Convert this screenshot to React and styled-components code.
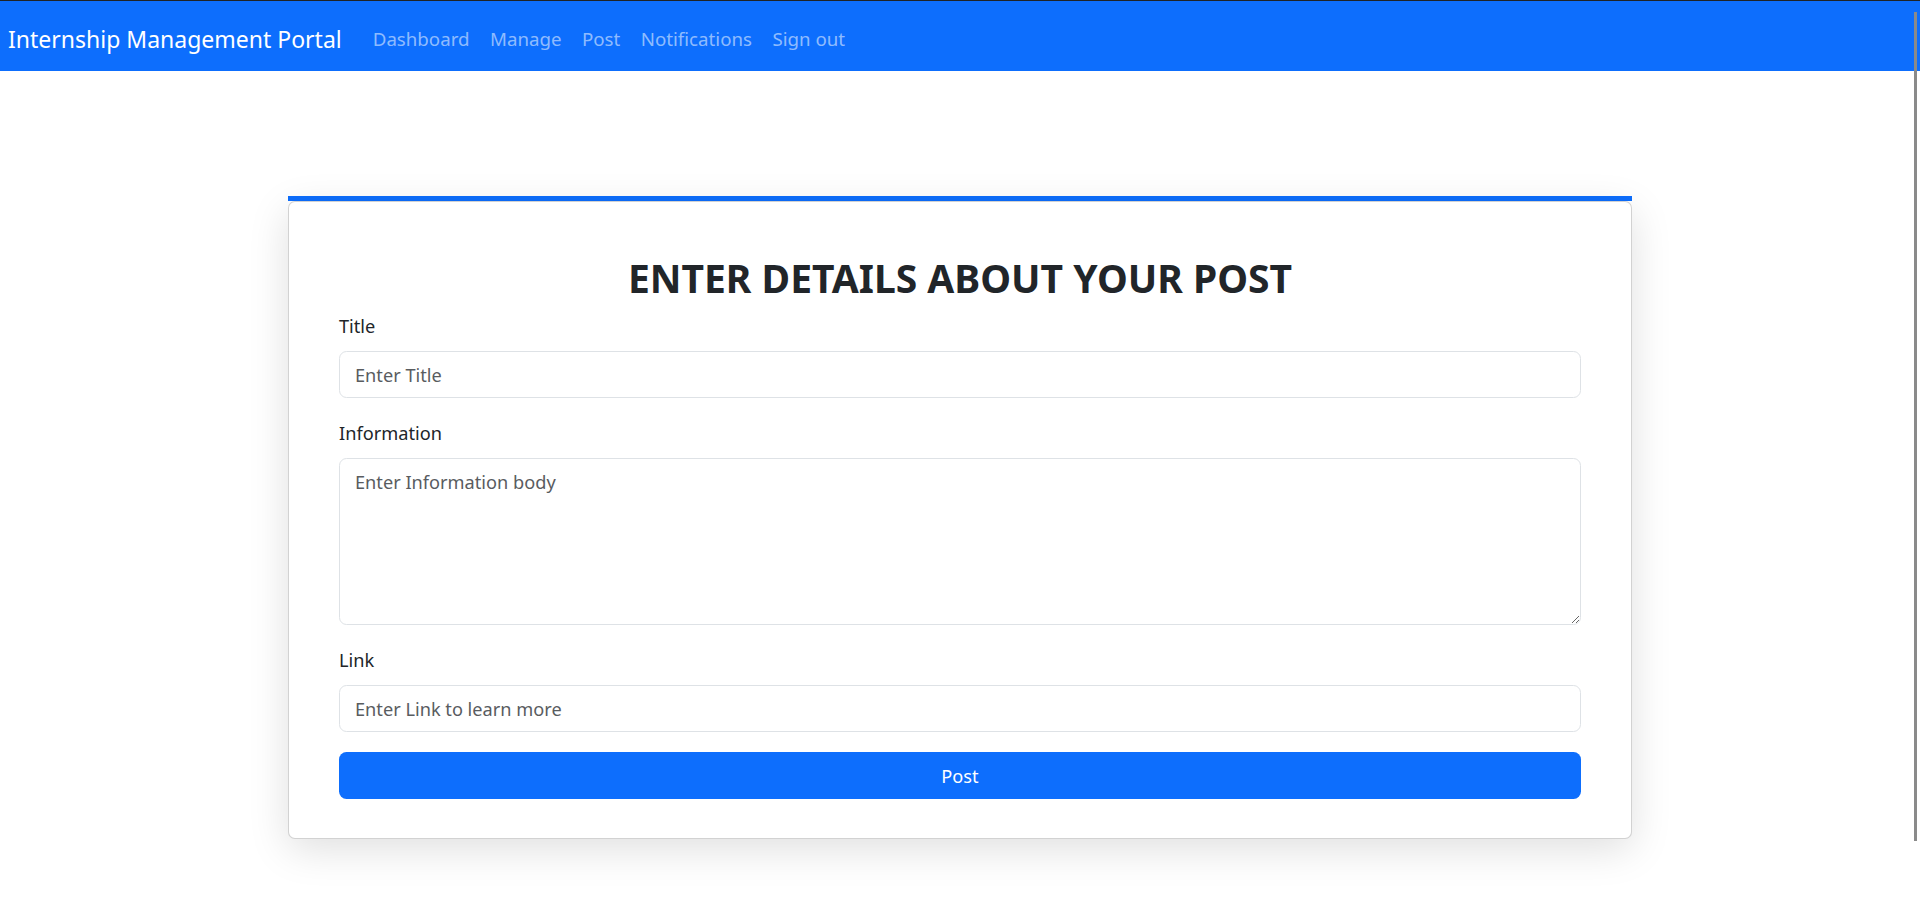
import React from 'react';
import styled, { createGlobalStyle } from 'styled-components';

const GlobalStyle = createGlobalStyle`
    * {
        box-sizing: border-box;
    }
    body {
        margin: 0;
        background: #fff;
        color: #212529;
        font-family: "Noto Sans", "Open Sans", sans-serif;
        font-size: 18.2px;
        line-height: 30px;
    }
`;

const Navbar = styled.nav`
    height: 71px;
    border-top: 1px solid #1f2326;
    background: #0d6efd;
    display: flex;
    align-items: center;
    padding: 5px 0 0 8px;
`;

const Brand = styled.a`
    color: #fff;
    font-size: 23px;
    line-height: 30px;
    margin-right: 31px;
    text-decoration: none;
    cursor: pointer;
    white-space: nowrap;
`;

const NavLinks = styled.div`
    display: flex;
    align-items: center;
    gap: 20.5px;
`;

const NavLink = styled.a`
    color: rgba(255, 255, 255, 0.55);
    font-size: 18.7px;
    text-decoration: none;
    cursor: pointer;
    white-space: nowrap;
`;

const Page = styled.main`
    padding: 125px 0 60px;
`;

const Frame = styled.div`
    width: 70%;
    margin: 0 auto;
    border-top: 5px solid #0d6efd;
`;

const Card = styled.form`
    background: #fff;
    border: 1px solid rgba(0, 0, 0, 0.175);
    border-radius: 7px;
    box-shadow: 0 10px 40px rgba(0, 0, 0, 0.13);
    padding: 49px 50px 39px;
`;

const Heading = styled.h1`
    margin: 0 0 6px;
    text-align: center;
    font-size: 39px;
    line-height: 54px;
    font-weight: 700;
    color: #212529;
`;

const Field = styled.div`
    margin-bottom: 20px;
`;

const Label = styled.label`
    display: block;
    margin-bottom: 10px;
    line-height: 30px;
`;

const inputBase = `
    display: block;
    width: 100%;
    border: 1px solid #dee2e6;
    border-radius: 7.5px;
    padding: 7.5px 15px;
    font-family: "Noto Sans", "Open Sans", sans-serif;
    font-size: 18.2px;
    line-height: 30px;
    color: #212529;
    background: #fff;
    outline: none;
    &::placeholder {
        color: #595c5f;
    }
`;

const Input = styled.input`
    ${inputBase}
    height: 47px;
`;

const TextArea = styled.textarea`
    ${inputBase}
    height: 167px;
    resize: vertical;
`;

const Button = styled.button`
    display: block;
    width: 100%;
    height: 47px;
    border: none;
    border-radius: 7.5px;
    background: #0d6efd;
    color: #fff;
    font-family: "Noto Sans", "Open Sans", sans-serif;
    font-size: 18.2px;
    line-height: 30px;
    cursor: pointer;
`;

const ScrollThumb = styled.div`
    position: fixed;
    top: 12px;
    right: 3px;
    width: 3px;
    height: 829px;
    background: #8a8a8a;
`;

const links = ['Dashboard', 'Manage', 'Post', 'Notifications', 'Sign out'];

export default function App() {
    return (
        <>
            <GlobalStyle />
            <Navbar>
                <Brand>Internship Management Portal</Brand>
                <NavLinks>
                    {links.map(l => (
                        <NavLink key={l}>{l}</NavLink>
                    ))}
                </NavLinks>
            </Navbar>
            <Page>
                <Frame>
                    <Card onSubmit={e => e.preventDefault()}>
                        <Heading>ENTER DETAILS ABOUT YOUR POST</Heading>
                        <Field>
                            <Label>Title</Label>
                            <Input placeholder="Enter Title" />
                        </Field>
                        <Field>
                            <Label>Information</Label>
                            <TextArea placeholder="Enter Information body" />
                        </Field>
                        <Field>
                            <Label>Link</Label>
                            <Input placeholder="Enter Link to learn more" />
                        </Field>
                        <Button type="submit">Post</Button>
                    </Card>
                </Frame>
            </Page>
            <ScrollThumb />
        </>
    );
}
